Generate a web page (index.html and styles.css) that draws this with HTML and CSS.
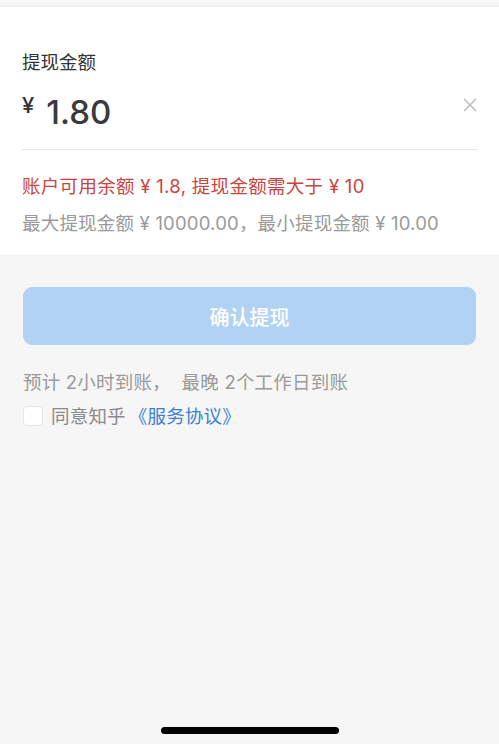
FILE: index.html
```html
<!DOCTYPE html>
<html lang="zh-CN">
<head>
  <meta charset="UTF-8" />
  <meta name="viewport" content="width=device-width, initial-scale=1.0"/>
  <title>提现</title>
  <link rel="stylesheet" href="styles.css">
</head>
<body>
  <div class="top-strip"></div>

  <div class="panel">
    <div class="label">提现金额</div>
    <div class="amount-row">
      <span class="currency">¥</span>
      <span class="amount">1.80</span>
      <span class="clear" title="清除">
        <svg width="14" height="14" viewBox="0 0 14 14">
          <path d="M1 1 L13 13 M13 1 L1 13" stroke="#b8b8b8" stroke-width="1.4" fill="none"/>
        </svg>
      </span>
    </div>
    <div class="error">账户可用余额 ¥ 1.8, 提现金额需大于 ¥ 10</div>
    <div class="limits">最大提现金额 ¥ 10000.00，最小提现金额 ¥ 10.00</div>
  </div>

  <button class="confirm" disabled>确认提现</button>

  <div class="note">预计 2小时到账，&nbsp; 最晚 2个工作日到账</div>
  <label class="agree">
    <input type="checkbox" class="check">
    <span class="box"></span>
    同意知乎<a class="link">《服务协议》</a>
  </label>

  <div class="home-indicator"></div>
</body>
</html>
```

FILE: styles.css
```css
body {
  font-family: 'Inter', 'Noto Sans CJK SC', sans-serif;
  background-color: #f6f6f6;
  color: #333;
  margin: 0;
  padding: 0;
  height: 744px;
  position: relative;
  overflow: hidden;
}

.top-strip {
  height: 5px;
  background-color: #f8f8f8;
  border-bottom: 2px solid #f0f0f0;
}

.panel {
  background-color: #fff;
  padding: 42px 22px 18px;
}

.label {
  font-size: 18.5px;
  line-height: 26px;
  color: #333;
}

.amount-row {
  display: flex;
  align-items: center;
  height: 50px;
  margin-top: 12px;
  padding-bottom: 12px;
  border-bottom: 1px solid #e6e6e6;
}

.currency {
  font-size: 22px;
  font-weight: 500;
  color: #333;
  align-self: flex-start;
  margin-top: 5px;
  margin-right: 12px;
}

.amount {
  font-size: 33px;
  font-weight: 500;
  color: #3a3a3a;
  line-height: 50px;
}

.clear {
  margin-left: auto;
  display: flex;
  align-self: flex-start;
  margin-top: 11px;
}

.error {
  margin-top: 23px;
  font-size: 18.5px;
  line-height: 26px;
  letter-spacing: 0.3px;
  color: #c8463f;
}

.limits {
  margin-top: 11px;
  font-size: 18.5px;
  line-height: 26px;
  letter-spacing: 0.2px;
  color: #9a9a9a;
}

.confirm {
  display: block;
  width: calc(100% - 46px);
  height: 58px;
  margin: 33px 23px 0;
  border: none;
  border-radius: 9px;
  background-color: #b2d2f4;
  color: #fff;
  font-family: inherit;
  font-size: 20px;
  font-weight: 500;
}

.note {
  margin: 24px 23px 0;
  font-size: 18.5px;
  line-height: 26px;
  letter-spacing: 0.2px;
  color: #9a9a9a;
}

.agree {
  display: flex;
  align-items: center;
  margin: 8px 23px 0;
  font-size: 18.5px;
  line-height: 26px;
  letter-spacing: 0.2px;
  color: #8a8a8a;
}

.check {
  display: none;
}

.box {
  width: 18px;
  height: 18px;
  border: 1px solid #e4e4e4;
  border-radius: 4px;
  background-color: #fff;
  margin-right: 8px;
}

.link {
  margin-left: 3px;
  color: #3a7fd5;
}

.home-indicator {
  position: absolute;
  left: 161px;
  bottom: 10px;
  width: 178px;
  height: 7px;
  border-radius: 4px;
  background-color: #000;
}
```
